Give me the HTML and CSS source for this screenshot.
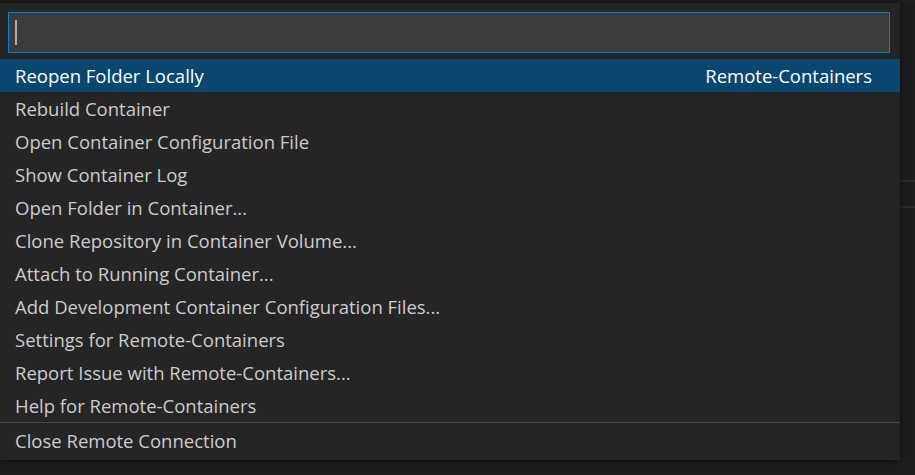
FILE: index.html
```html
<!DOCTYPE html>
<html>
<head>
<meta charset="utf-8">
<link rel="stylesheet" href="styles.css">
</head>
<body>
<div class="editor">
  <div class="eline eline-a"></div>
  <div class="eline eline-b"></div>
</div>
<div class="quick-input">
  <div class="input-box"><span class="caret"></span></div>
  <div class="list">
    <div class="row selected"><span class="label">Reopen Folder Locally</span><span class="detail">Remote-Containers</span></div>
    <div class="row"><span class="label">Rebuild Container</span></div>
    <div class="row"><span class="label">Open Container Configuration File</span></div>
    <div class="row"><span class="label">Show Container Log</span></div>
    <div class="row"><span class="label">Open Folder in Container...</span></div>
    <div class="row"><span class="label">Clone Repository in Container Volume...</span></div>
    <div class="row"><span class="label">Attach to Running Container...</span></div>
    <div class="row"><span class="label">Add Development Container Configuration Files...</span></div>
    <div class="row"><span class="label">Settings for Remote-Containers</span></div>
    <div class="row"><span class="label">Report Issue with Remote-Containers...</span></div>
    <div class="row"><span class="label">Help for Remote-Containers</span></div>
    <div class="row separated"><span class="label">Close Remote Connection</span></div>
  </div>
</div>
</body>
</html>
```
FILE: styles.css
```css
html, body {
  margin: 0;
  padding: 0;
  width: 915px;
  height: 475px;
  overflow: hidden;
  background: #1e1e1e;
  font-family: "Open Sans", "Noto Sans", sans-serif;
}
.editor {
  position: relative;
  width: 915px;
  height: 475px;
  border-top: 3px solid #202020;
  box-sizing: border-box;
}
.eline {
  position: absolute;
  left: 0;
  right: 0;
  height: 2px;
  background: #2b2b2b;
}
.eline-a { top: 177px; }
.eline-b { top: 203px; }
.quick-input {
  position: absolute;
  top: 3px;
  left: 0;
  width: 900px;
  height: 457px;
  background: #252526;
  box-shadow: 0 0 8px rgba(0, 0, 0, 0.6);
  padding-top: 9px;
  box-sizing: border-box;
}
.input-box {
  margin-left: 8px;
  width: 882px;
  height: 41px;
  box-sizing: border-box;
  border: 1px solid #007fd4;
  background: #3c3c3c;
  display: flex;
  align-items: center;
  padding-left: 6px;
}
.caret {
  width: 2px;
  height: 25px;
  background: #aeafad;
}
.list {
  margin-top: 6px;
  display: flex;
  flex-direction: column;
}
.row {
  height: 33px;
  display: flex;
  align-items: center;
  justify-content: space-between;
  padding: 0 28px 0 15px;
  color: #cccccc;
  font-size: 18.5px;
  white-space: nowrap;
  box-sizing: border-box;
}
.row.selected {
  background: #094771;
  color: #ffffff;
}
.row.separated {
  border-top: 1px solid #474747;
  height: 35px;
  padding-top: 1px;
}
```
